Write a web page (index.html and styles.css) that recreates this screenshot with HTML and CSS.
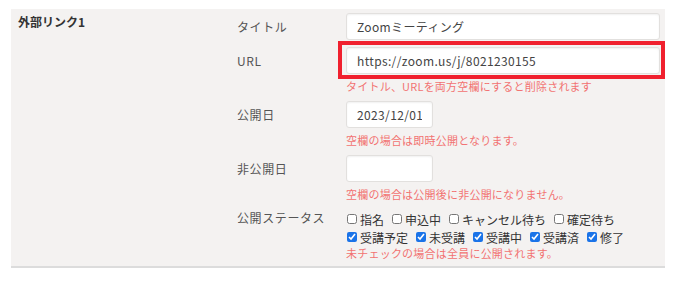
FILE: index.html
```html
<!DOCTYPE html>
<html lang="ja">
<head>
    <meta charset="UTF-8">
    <meta name="viewport" content="width=device-width, initial-scale=1.0">
    <title>外部リンク</title>
    <link rel="stylesheet" href="styles.css">
</head>
<body>
    <div class="panel">
        <div class="panel-head">外部リンク1</div>
        <div class="fields">
            <div class="label">タイトル</div>
            <div class="field">
                <input type="text" class="text-input" value="Zoomミーティング">
            </div>

            <div class="label">URL</div>
            <div class="field">
                <div class="highlight">
                    <input type="text" class="text-input" value="https://zoom.us/j/8021230155">
                </div>
                <p class="hint">タイトル、URLを両方空欄にすると削除されます</p>
            </div>

            <div class="label">公開日</div>
            <div class="field">
                <input type="text" class="text-input date-input" value="2023/12/01">
                <p class="hint">空欄の場合は即時公開となります。</p>
            </div>

            <div class="label">非公開日</div>
            <div class="field">
                <input type="text" class="text-input date-input" value="">
                <p class="hint">空欄の場合は公開後に非公開になりません。</p>
            </div>

            <div class="label label-status">公開ステータス</div>
            <div class="field field-status">
                <div class="check-row">
                    <label class="check"><input type="checkbox">指名</label>
                    <label class="check"><input type="checkbox">申込中</label>
                    <label class="check"><input type="checkbox">キャンセル待ち</label>
                    <label class="check"><input type="checkbox">確定待ち</label>
                </div>
                <div class="check-row">
                    <label class="check"><input type="checkbox" checked>受講予定</label>
                    <label class="check"><input type="checkbox" checked>未受講</label>
                    <label class="check"><input type="checkbox" checked>受講中</label>
                    <label class="check"><input type="checkbox" checked>受講済</label>
                    <label class="check"><input type="checkbox" checked>修了</label>
                </div>
                <p class="hint hint-tight">未チェックの場合は全員に公開されます。</p>
            </div>
        </div>
    </div>
</body>
</html>
```

FILE: styles.css
```css
body {
    margin: 0;
    padding: 0;
    background: #fff;
    font-family: "Noto Sans CJK JP", "Noto Sans", sans-serif;
    color: #555;
}
.panel {
    display: flex;
    margin: 9px 11px 0 11px;
    padding: 4px 5px 5px 0;
    background: #f4f2f1;
    border-bottom: 2px solid #dcdcdc;
}
.panel-head {
    width: 219px;
    padding-left: 7px;
    font-size: 12px;
    line-height: 17px;
    font-weight: bold;
    color: #333;
}
.fields {
    flex: 1;
    display: grid;
    grid-template-columns: 109px 1fr;
    row-gap: 7px;
}
.label {
    font-size: 12px;
    line-height: 27px;
    letter-spacing: 0.05em;
    color: #555;
}
.label-status {
    line-height: 16px;
    padding-top: 1px;
}
.field {
    display: flex;
    flex-direction: column;
    align-items: flex-start;
}
.text-input {
    display: block;
    box-sizing: border-box;
    width: 314px;
    height: 27px;
    margin: 0;
    padding: 0 10px;
    font-family: inherit;
    font-size: 12px;
    letter-spacing: 0.03em;
    color: #444;
    background: #fff;
    border: 1px solid #e2e0de;
    border-radius: 3px;
    box-shadow: inset 0 1px 2px rgba(0,0,0,0.06);
    outline: none;
}
.date-input {
    width: 87px;
}
.highlight {
    position: relative;
}
.highlight::after {
    content: "";
    position: absolute;
    top: -6px;
    left: -8px;
    right: -5px;
    bottom: -5px;
    border: 4px solid #f0202e;
    pointer-events: none;
}
.hint {
    margin: 5px 0 0 0;
    font-size: 11px;
    line-height: 15px;
    color: #f27272;
    letter-spacing: 0.02em;
}
.hint-tight {
    margin-top: 0;
}
.field-status {
    padding-top: 1px;
}
.check-row {
    display: flex;
    align-items: center;
    height: 18px;
}
.check {
    display: flex;
    align-items: center;
    font-size: 12px;
    color: #333;
    margin-right: 7px;
}
.check input {
    width: 10px;
    height: 10px;
    margin: 0 3px 0 1px;
    accent-color: #1a73e8;
}
```
